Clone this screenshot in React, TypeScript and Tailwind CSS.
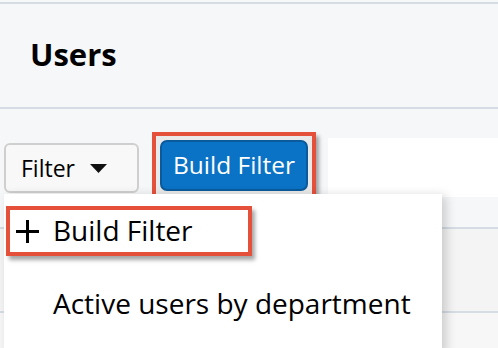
export default function App() {
  return (
    <div
      className="relative w-[498px] h-[348px] overflow-hidden bg-[#f6f7f9] text-black"
      style={{ fontFamily: '"Open Sans", "Noto Sans", sans-serif' }}
    >
      {/* Page header */}
      <div className="mt-[2px] border-t-2 border-b-2 border-[#d6dce3] h-[107px] flex items-center px-[30px]">
        <h1 className="text-[31px] font-bold leading-none -mt-[2px]">Users</h1>
      </div>

      {/* Toolbar */}
      <div className="flex items-start h-[88px]">
        <button className="mt-[34px] ml-[4px] w-[135px] h-[50px] flex items-center gap-[15px] pl-[15px] rounded-[6px] border-2 border-[#cfcfcf] bg-[#f8f8f8] text-[23px]">
          <span>Filter</span>
          <svg width="17" height="9" viewBox="0 0 17 9">
            <path d="M0 0h17L8.5 9z" fill="#111" />
          </svg>
        </button>
        <div className="mt-[23px] ml-[13px] border-[4px] border-[#e4503a] p-[4px] bg-[#e9e9e9] shadow-[3px_4px_4px_rgba(0,0,0,0.35)]">
          <button className="w-[148px] h-[51px] rounded-[7px] border-2 border-[#0b5a9c] bg-[#0a73c5] text-white text-[24.5px]">
            Build Filter
          </button>
        </div>
        <div className="mt-[29px] ml-[12px] flex-1 h-[59px] bg-white" />
      </div>

      {/* List behind menu */}
      <div className="h-[30px]" />
      <div className="border-t-2 border-[#d6dce3] h-[84px] bg-[#f4f4f4]" />
      <div className="border-t-2 border-[#d6dce3] h-[40px] bg-[#f7f7f7]" />

      {/* Dropdown menu */}
      <div className="absolute left-[4px] top-[194px] w-[438px] h-[160px] bg-white shadow-[4px_2px_10px_rgba(0,0,0,0.18)]">
        <div className="mt-[12px] ml-[2px] w-[246px] h-[50px] border-[4px] border-[#e4503a] shadow-[3px_4px_4px_rgba(0,0,0,0.35)] flex items-center gap-[13px] pl-[5px]">
          <svg width="25" height="25" viewBox="0 0 25 25">
            <path d="M12.5 1v23M1 12.5h23" stroke="#000" strokeWidth="3" />
          </svg>
          <span className="text-[28px] leading-none -mt-[2px]">Build Filter</span>
        </div>
        <div className="mt-[33px] pl-[49px] text-[28px] leading-none">Active users by department</div>
      </div>
    </div>
  );
}
